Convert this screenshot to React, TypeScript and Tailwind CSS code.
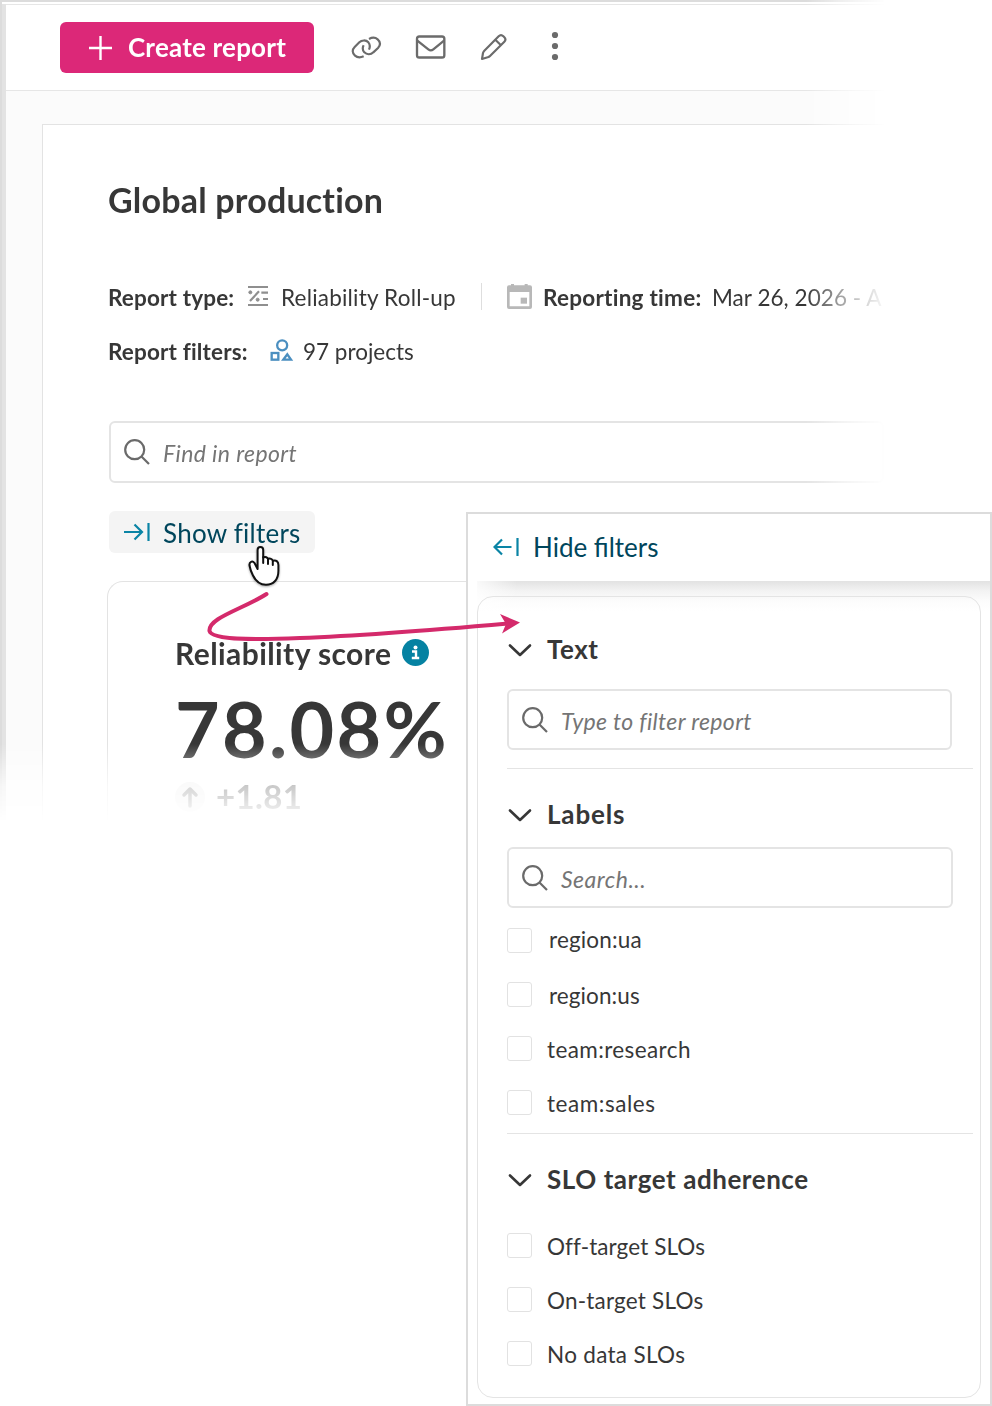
import React from 'react';

const labels = [
  { text: 'region:ua', cls: 'ml-[17px] -mt-[2px] tracking-[0.15px]' },
  { text: 'region:us', cls: 'ml-[17px] mt-px tracking-[0.1px]' },
  { text: 'team:research', cls: 'ml-[15px] mt-[2px] tracking-[0.4px]' },
  { text: 'team:sales', cls: 'ml-[15px] mt-[2px] tracking-[0.55px]' },
];

const adherence = [
  { text: 'Off-target SLOs', cls: 'ml-[15px] mt-[2px] tracking-[0.1px]' },
  { text: 'On-target SLOs', cls: 'ml-[15px] mt-[2px] tracking-[0.2px]' },
  { text: 'No data SLOs', cls: 'ml-[15px] mt-[2px] tracking-[0.3px]' },
];

const LinkIcon = () => (
  <svg width="32" height="26" viewBox="60 102 96 78" fill="none" stroke="#6b6b6b" strokeWidth="6.5">
    <path d="M101 169C92 173 82 173 75 167C66 159 66 149 74 141L88 127C95 120 108 119 115 127C120 133 120 142 117 149" />
    <path d="M117 117C126 112 136 112 143 118C152 126 151 136 144 144L130 157C122 165 110 164 103 157C98 151 97 143 101 136" />
  </svg>
);

const MailIcon = () => (
  <svg width="32" height="24" viewBox="256 106 96 72" fill="none" stroke="#6b6b6b" strokeWidth="7" strokeLinejoin="round">
    <rect x="262" y="110.500" width="82" height="63" rx="7" />
    <path d="M262 122L296 149Q303.500 155 311 149L344 122" />
  </svg>
);

const PencilIcon = () => (
  <svg width="28" height="28" viewBox="450 100 84 84" fill="none" stroke="#6b6b6b" strokeWidth="6.5" strokeLinejoin="round">
    <path d="M456 178L459 160C460 157 461 155 463 153L506 110C510 106 516 106 520 110L523 113C527 117 527 122 523 126L480 169C478 171 476 172 473 173Z" />
    <path d="M496 120L513 137" />
  </svg>
);

const RollupIcon = () => (
  <svg width="20" height="20" viewBox="0 0 60 60" stroke="#8f8f8f" strokeWidth="6.5" fill="#8f8f8f">
    <path d="M0 3H60M0 57H60M33 16L6 45M40 20H60M45 39H60" />
    <circle cx="7" cy="19" r="4.500" strokeWidth="3" />
    <circle cx="29" cy="41" r="4.500" strokeWidth="3" />
  </svg>
);

const ShapesIcon = () => (
  <svg width="24" height="22" viewBox="540 238 72 66" fill="none" stroke="#4b8fc0" strokeWidth="7">
    <circle cx="576.500" cy="257" r="15" />
    <rect x="545" y="280" width="20" height="20" />
    <path d="M592 284L603 300H580Z" />
  </svg>
);

const CalendarIcon = () => (
  <svg width="25" height="25" viewBox="111 72 75 75" fill="#b8b8b8">
    <path
      fillRule="evenodd"
      d="M123 72H132V76H164V72H173V76H180Q186 76 186 82V141Q186 147 180 147H117Q111 147 111 141V82Q111 76 117 76H123ZM119 96V139H178V96Z"
    />
    <rect x="152" y="113" width="19" height="18" />
  </svg>
);

const SearchIcon = () => (
  <svg width="26" height="26" viewBox="0 0 26 26" fill="none" stroke="#6a6a6a" strokeWidth="2.2">
    <circle cx="10.700" cy="10.700" r="9.500" />
    <path d="M17.500 17.500L25 25" />
  </svg>
);

const ChevronIcon = () => (
  <svg width="24" height="14" viewBox="0 0 24 14" fill="none" stroke="#373737" strokeWidth="2.6" strokeLinecap="round" strokeLinejoin="round">
    <path d="M2 2.500L12 12L22 2.500" />
  </svg>
);

const CollapseIcon: React.FC<{ flip?: boolean }> = ({ flip }) => (
  <svg width="26" height="20" viewBox="0 0 26 20" fill="none" stroke="#0a84a5" strokeWidth="2.2">
    {flip ? (
      <path d="M18.500 10H1.500M9 2.500L1.500 10L9 17.500M24.500 1V19" />
    ) : (
      <path d="M0 10H18M10.500 2.500L18 10L10.500 17.500M24.500 1V19" />
    )}
  </svg>
);

const HandCursor = () => (
  <svg
    width="40"
    height="48"
    viewBox="244 542 40 48"
    className="absolute top-[542px] left-[244px] drop-shadow-[0_1px_1px_rgba(0,0,0,0.35)]"
    fill="#fff"
    stroke="#111"
    strokeWidth="2"
    strokeLinejoin="round"
    strokeLinecap="round"
  >
    <path d="M257.600 569V550C257.600 546 263.200 546 263.200 550V557.500C265.500 556.500 267.500 557.500 268 559C270 558 272.300 559 272.800 560.800C276 559.500 278.400 561.500 278.400 565V571C278.400 580 273 584.800 266 584.800C259.500 584.800 256 581.500 253 575.500C251.500 572.500 250 568.500 249.500 565.500C249 561.500 252.500 560.500 254.500 563Z" />
    <path d="M263.200 557V563M268 559V564M272.800 561V565" fill="none" />
  </svg>
);

const Arrow = () => (
  <svg width="330" height="60" viewBox="200 585 330 60" className="absolute top-[585px] left-[200px]">
    <path
      d="M266.500 594C243 609 208 618 209.500 631C212 641 262 639.500 300 638C370 635.500 440 629.500 508 623.500"
      fill="none"
      stroke="#d42a6b"
      strokeWidth="4"
      strokeLinecap="round"
    />
    <path d="M500 614L520 622.500L502 633.500L506 624Z" fill="#d42a6b" />
  </svg>
);

const SearchBox: React.FC<{ placeholder: string; className: string; textClass: string }> = ({
  placeholder, className, textClass,
}) => (
  <div className={`flex items-center rounded-md border-2 border-[#e4e4e4] bg-white pl-[13px] ${className}`}>
    <SearchIcon />
    <span className={`ml-[13px] pt-[3px] text-[23px] text-[#757575] italic ${textClass}`}>{placeholder}</span>
  </div>
);

const SectionHeader: React.FC<{ title: string; className: string }> = ({ title, className }) => (
  <div className="flex h-10 items-center">
    <div className="w-10 pl-px"><ChevronIcon /></div>
    <h3 className={`-mt-[2px] text-[26px] font-bold ${className}`}>{title}</h3>
  </div>
);

const CheckList: React.FC<{ items: { text: string; cls: string }[]; className: string }> = ({ items, className }) => (
  <ul className={`flex flex-col gap-[29px] ${className}`}>
    {items.map(item => (
      <li key={item.text} className="flex h-[25px] items-center">
        <span className="h-[25px] w-[25px] rounded-[3px] border border-[#e2e2e2] bg-white" />
        <span className={`text-[22.5px] leading-[25px] ${item.cls}`}>{item.text}</span>
      </li>
    ))}
  </ul>
);

const ReportPage = () => (
  <div className="h-[824px] w-[884px] overflow-hidden border-t-2 border-l-2 border-[#dcdcdc] pt-[2px] [mask-composite:intersect] [mask-image:linear-gradient(to_right,#000_806px,rgba(0,0,0,0.5)_838px,rgba(0,0,0,0.3)_855px,rgba(0,0,0,0.14)_873px,rgba(0,0,0,0.03)_884px),linear-gradient(to_bottom,#000_744px,rgba(0,0,0,0.77)_757px,rgba(0,0,0,0.27)_786px,rgba(0,0,0,0.1)_809px,transparent_822px)]">
    <div className="border-l-4 border-[#e3e3e3] bg-[#fbfbfb]">
      <header className="flex h-[87px] items-center border-y border-[#e6e6e6] bg-white pl-[54px]">
        <button className="flex h-[51px] w-[254px] items-center rounded-md bg-[#dc2878] pl-7 text-white">
          <svg width="24" height="24" viewBox="0 0 24 24" stroke="currentColor" strokeWidth="2.4">
            <path d="M12.500 0V24M1 12H24" />
          </svg>
          <span className="ml-4 text-[26px] font-bold tracking-[0.2px]">Create report</span>
        </button>
        <div className="-mt-px ml-9 flex items-center">
          <LinkIcon />
          <div className="ml-[33px]"><MailIcon /></div>
          <div className="ml-[33px]"><PencilIcon /></div>
          <svg width="8" height="30" viewBox="0 0 8 30" fill="#6b6b6b" className="-mt-[2px] ml-[43px]">
            <circle cx="4" cy="4" r="3.100" />
            <circle cx="4" cy="15" r="3.100" />
            <circle cx="4" cy="26" r="3.100" />
          </svg>
        </div>
      </header>

      <main className="pt-[33px] pl-9">
        <div className="h-[760px] border-t border-l border-[#e3e3e3] bg-white pt-[54px] pl-16">
          <h1 className="flex h-10 items-center pl-px text-[34px] font-bold tracking-[0.2px]">Global production</h1>

          <div className="mt-[61px] flex h-8 items-center text-[22.5px] whitespace-nowrap">
            <span className="w-[141px] shrink-0 pt-[3px] pl-px font-bold tracking-[0.15px]">Report type:</span>
            <div className="shrink-0"><RollupIcon /></div>
            <span className="w-[213px] shrink-0 pt-[3px] pl-[13px] tracking-[0.2px]">Reliability Roll-up</span>
            <span className="h-[27px] w-px shrink-0 bg-[#dedede]" />
            <div className="ml-[25px] shrink-0"><CalendarIcon /></div>
            <span className="ml-[11px] w-[169px] shrink-0 pt-[3px] font-bold tracking-[0.25px]">Reporting time:</span>
            <span className="pt-[3px] tracking-[0.05px]">Mar 26, 2026 - A</span>
          </div>
          <div className="mt-[22px] flex h-8 items-center text-[22.5px]">
            <span className="w-[163px] pt-[3px] pl-px font-bold tracking-[0.15px]">Report filters:</span>
            <ShapesIcon />
            <span className="ml-2 pt-[3px] pl-px">97 projects</span>
          </div>

          <SearchBox placeholder="Find in report" className="mt-[55px] ml-[2px] h-[62px]" textClass="tracking-[0.4px]" />

          <button className="mt-7 ml-[2px] flex h-[42px] w-[206px] items-center rounded-md bg-[#f4f4f4] pl-[15px]">
            <CollapseIcon />
            <span className="ml-[13px] pt-[2px] text-[26px] tracking-[0.25px] text-[#00465c]">Show filters</span>
          </button>

          <section className="mt-7 h-[300px] rounded-tl-2xl border-t border-l border-[#e3e3e3] pt-[51px] pl-[67px]">
            <div className="flex h-10 items-center">
              <h2 className="text-[30px] font-bold tracking-[0.42px]">Reliability score</h2>
              <svg width="27" height="27" viewBox="0 0 27 27" className="-mt-px ml-[11px]">
                <circle cx="13.500" cy="13.500" r="13.500" fill="#0582a2" />
                <circle cx="13.500" cy="8.500" r="2" fill="#fff" />
                <path d="M10 12.500H14V19M9.800 19H17.200" fill="none" stroke="#fff" strokeWidth="2.400" />
              </svg>
            </div>
            <div className="mt-[15px] h-20 text-[77px] leading-[80px] font-bold tracking-[2.3px]">78.08%</div>
            <div className="mt-[13px] flex h-8 items-center">
              <svg width="30" height="30" viewBox="0 0 30 30" fill="none">
                <circle cx="15" cy="15" r="15" fill="#eeeeee" />
                <path d="M15 24V7M9 13L15 7L21 13" stroke="#6b6b6b" strokeWidth="3.500" strokeLinecap="round" strokeLinejoin="round" />
              </svg>
              <span className="ml-[11px] text-[33px] font-bold tracking-[0.4px]">+1.81</span>
            </div>
          </section>
        </div>
      </main>
    </div>
  </div>
);

const FilterPanel = () => (
  <aside className="absolute top-[512px] left-[466px] h-[894px] w-[526px] border-2 border-[#dcdcdc] bg-white">
    <div className="flex h-[65px] items-center pl-[25px]">
      <CollapseIcon flip />
      <span className="ml-[14px] pt-[2px] text-[26px] text-[#00465c]">Hide filters</span>
    </div>
    <div className="mt-[2px] ml-[9px] bg-[linear-gradient(to_right,rgba(255,255,255,0.8),rgba(255,255,255,0)_40px),linear-gradient(to_bottom,#e2e2e2,#f3f3f3_10px,#fcfcfc_20px,#fff_30px)] pt-[15px]">
      <div className="h-[802px] w-[504px] rounded-2xl border border-[#e4e4e4] pt-[33px] pl-[29px]">
        <SectionHeader title="Text" className="tracking-[0.5px]" />
        <SearchBox placeholder="Type to filter report" className="mt-[19px] h-[61px] w-[445px]" textClass="tracking-[0.35px]" />
        <div className="mt-[18px] w-[466px] border-t border-[#e4e4e4] pt-[26px]">
          <SectionHeader title="Labels" className="tracking-[0.85px]" />
          <SearchBox placeholder="Search..." className="mt-3 h-[61px] w-[446px]" textClass="tracking-[0.5px]" />
          <CheckList items={labels} className="mt-5" />
        </div>
        <div className="mt-[18px] w-[466px] border-t border-[#e4e4e4] pt-[26px]">
          <SectionHeader title="SLO target adherence" className="tracking-[0.55px]" />
          <CheckList items={adherence} className="mt-[33px]" />
        </div>
      </div>
    </div>
  </aside>
);

export default function App() {
  return (
    <div className="relative h-[1406px] w-[992px] overflow-hidden bg-white font-['Lato',sans-serif] text-[#373737]">
      <ReportPage />
      <FilterPanel />
      <Arrow />
      <HandCursor />
    </div>
  );
}
